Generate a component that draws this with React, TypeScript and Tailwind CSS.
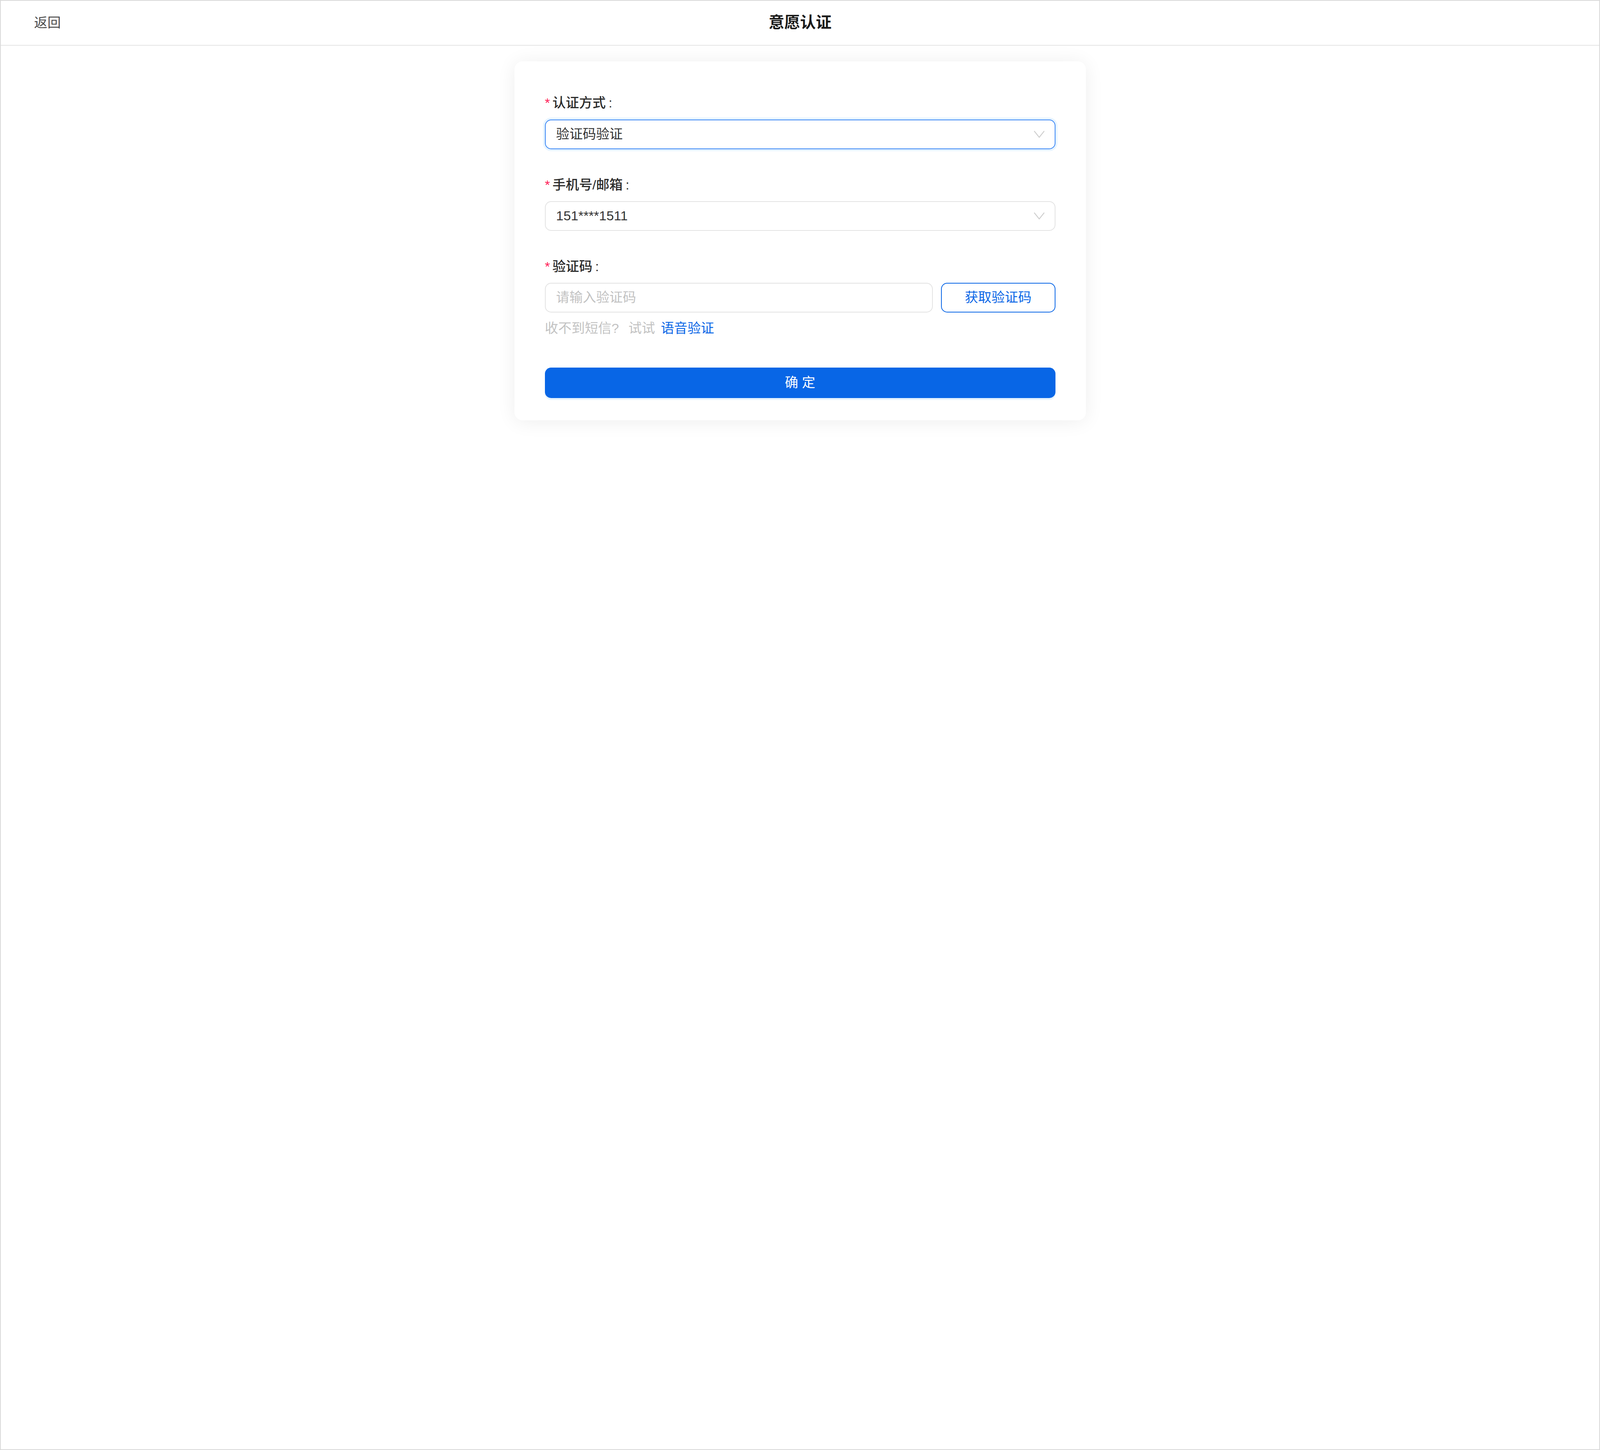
import React, { useEffect, useState } from "react";

const FONT = "font-['Liberation_Sans','Noto_Sans_CJK_SC',sans-serif]";

function useScale() {
  const get = () => (typeof window === "undefined" ? 1 : window.innerWidth / 6720);
  const [scale, setScale] = useState(get);
  useEffect(() => {
    const on = () => setScale(get());
    window.addEventListener("resize", on);
    return () => window.removeEventListener("resize", on);
  }, []);
  return scale;
}

function Chevron() {
  return (
    <svg width="44" height="30" viewBox="0 0 44 30" fill="none">
      <path d="M2 2 L22 27 L42 2" stroke="#cfcfcf" strokeWidth="4" strokeLinecap="round" strokeLinejoin="round" />
    </svg>
  );
}

function Label({ text }: { text: string }) {
  return (
    <div className="flex h-[86px] items-center text-[56px] leading-[86px] font-medium text-[#2b2b2b]">
      <span className="mr-[10px] text-[#ff1f5a]">*</span>
      <span>{text}</span>
      <span className="ml-[12px]">:</span>
    </div>
  );
}

export default function App() {
  const scale = useScale();
  return (
    <div className={`${FONT} box-border h-screen w-screen overflow-hidden border-[2px] border-[#d9d9d9] bg-white`}>
      <div style={{ zoom: scale }} className="flex w-[6714px] flex-col bg-white">
        <header className="box-border grid h-[189px] grid-cols-[1fr_auto_1fr] items-center border-b-[4px] border-[#e5e5e5] px-[140px]">
          <div className="text-[56px] text-[#4a4a4a]">返回</div>
          <div className="text-[66px] font-bold text-[#1a1a1a]">意愿认证</div>
          <div />
        </header>

        <main className="flex justify-center pt-[65px]">
          <div className="box-border w-[2400px] rounded-[34px] bg-white px-[128px] pt-[132px] pb-[95px] shadow-[0_6px_80px_rgba(0,0,0,0.07)]">
            <Label text="认证方式" />
            <div className="mt-[26px] box-border flex h-[126px] items-center justify-between rounded-[26px] border-[4px] border-[#3b87f5] pl-[44px] pr-[42px] text-[56px] text-[#333333] shadow-[0_0_0_8px_rgba(5,145,255,0.1)]">
              <span>验证码验证</span>
              <Chevron />
            </div>

            <div className="mt-[106px]">
              <Label text="手机号/邮箱" />
            </div>
            <div className="mt-[25px] box-border flex h-[126px] items-center justify-between rounded-[26px] border-[4px] border-[#e3e3e3] pl-[44px] pr-[42px] text-[56px] text-[#333333]">
              <span>151****1511</span>
              <Chevron />
            </div>

            <div className="mt-[106px]">
              <Label text="验证码" />
            </div>
            <div className="mt-[25px] flex gap-[34px]">
              <div className="box-border flex h-[126px] flex-1 items-center rounded-[26px] border-[4px] border-[#e3e3e3] pl-[44px] text-[56px] text-[#c2c2c2]">
                请输入验证码
              </div>
              <button className="box-border h-[126px] w-[480px] rounded-[26px] border-[4px] border-[#0a66e6] bg-white text-[56px] text-[#0a66e6]">
                获取验证码
              </button>
            </div>

            <div className="mt-[23px] flex h-[86px] items-center text-[56px] leading-[86px]">
              <span className="text-[#c2c2c2]">收不到短信?</span>
              <span className="ml-[40px] text-[#c2c2c2]">试试</span>
              <span className="ml-[24px] text-[#0a66e6]">语音验证</span>
            </div>

            <button className="mt-[121px] box-border h-[128px] w-full rounded-[26px] bg-[#0866e6] text-[56px] text-white shadow-[0_8px_0_rgba(5,145,255,0.1)]">
              确 定
            </button>
          </div>
        </main>
      </div>
    </div>
  );
}
